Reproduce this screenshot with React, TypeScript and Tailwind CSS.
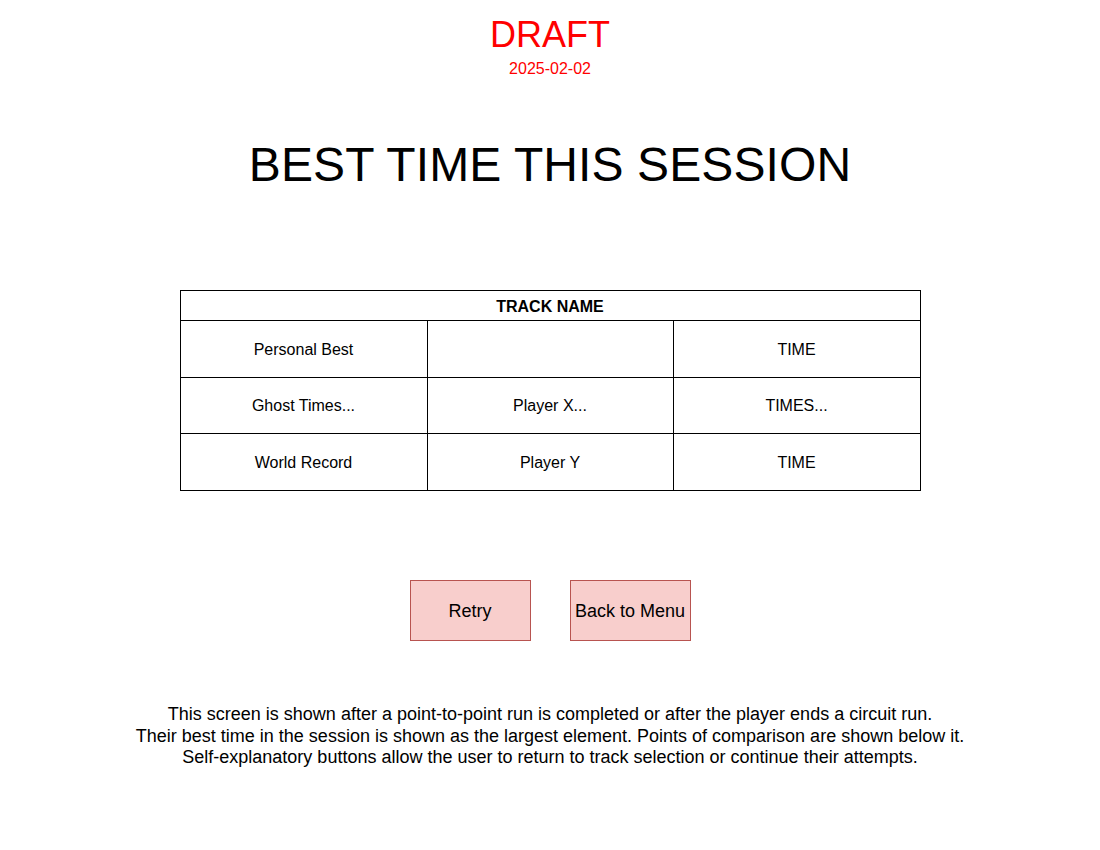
export default function App() {
  const rows = [
    ["Personal Best", "", "TIME"],
    ["Ghost Times...", "Player X...", "TIMES..."],
    ["World Record", "Player Y", "TIME"],
  ];
  return (
    <div
      className="w-[1100px] h-[850px] bg-white flex flex-col items-center text-black"
      style={{ fontFamily: '"Liberation Sans", Arial, sans-serif' }}
    >
      <div className="mt-[14px] text-[36px] leading-[41px] text-[#ff0000]">DRAFT</div>
      <div className="mt-[5px] text-[16px] leading-[18px] text-[#ff0000]">2025-02-02</div>
      <div className="mt-[59px] text-[48px] leading-[56px] tracking-[0.1px]">BEST TIME THIS SESSION</div>
      <div className="mt-[97px] w-[741px] border border-black">
        <div className="h-[30px] pt-[2px] flex items-center justify-center font-bold text-[16px] border-b border-black">
          TRACK NAME
        </div>
        {rows.map((r, i) => (
          <div
            key={i}
            className={`grid grid-cols-[247px_246px_1fr] ${i === 0 ? "h-[57px]" : "h-[56px]"} ${i < 2 ? "border-b border-black" : ""}`}
          >
            {r.map((c, j) => (
              <div
                key={j}
                className={`flex items-center justify-center pt-[1px] text-[16px] ${j < 2 ? "border-r border-black" : ""}`}
              >
                {c}
              </div>
            ))}
          </div>
        ))}
      </div>
      <div className="mt-[89px] flex gap-[39px]">
        <div className="w-[121px] h-[61px] pt-[1px] bg-[#f8cecc] border border-[#b85450] flex items-center justify-center text-[18px]">
          Retry
        </div>
        <div className="w-[121px] h-[61px] pt-[1px] bg-[#f8cecc] border border-[#b85450] flex items-center justify-center text-[18px]">
          Back to Menu
        </div>
      </div>
      <div className="mt-[63px] text-[18px] leading-[21.5px] text-center">
        <div>This screen is shown after a point-to-point run is completed or after the player ends a circuit run.</div>
        <div>Their best time in the session is shown as the largest element. Points of comparison are shown below it.</div>
        <div>Self-explanatory buttons allow the user to return to track selection or continue their attempts.</div>
      </div>
    </div>
  );
}
